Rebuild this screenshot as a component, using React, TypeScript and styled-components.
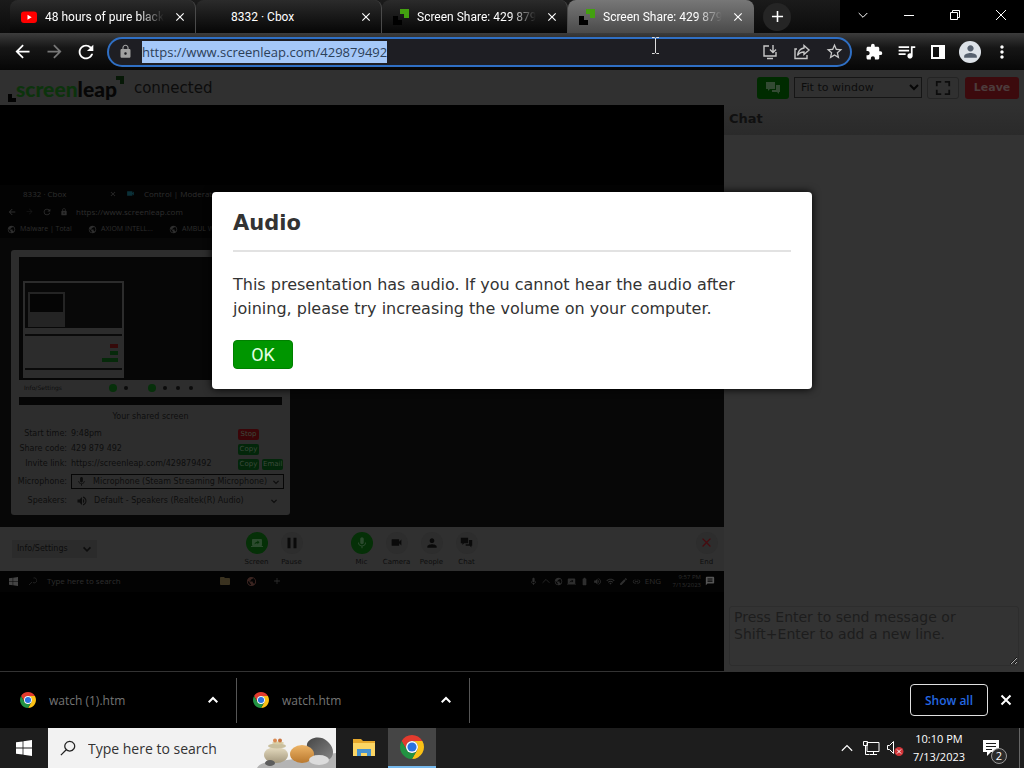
import React, { useEffect, useRef } from "react";
import styled, { createGlobalStyle } from "styled-components";
import {
  MdArrowBack,
  MdArrowForward,
  MdRefresh,
  MdLock,
  MdStarBorder,
  MdExtension,
  MdQueueMusic,
  MdMoreVert,
  MdClose,
  MdAdd,
  MdPerson,
  MdMic,
  MdVideocam,
  MdPause,
  MdVolumeUp,
  MdFolder,
  MdPublic,
  MdScreenShare,
  MdMessage,
  MdWifi,
  MdEdit,
  MdLink,
  MdBatteryFull,
} from "react-icons/md";

const ui = `"Open Sans", "Noto Sans", sans-serif`;
const page = `"DejaVu Sans", Verdana, sans-serif`;

const Global = createGlobalStyle`
  *, *::before, *::after { box-sizing: border-box; }
  body { margin: 0; background: #000; font-family: ${ui}; }
  button, input, select, textarea { font: inherit; color: inherit; margin: 0; padding: 0; border: 0; background: none; }
  svg { display: block; flex: none; }
`;

const Desktop = styled.div`
  min-height: 100vh;
  display: flex;
  flex-direction: column;
`;

/* ---------- browser frame ---------- */

const TabStrip = styled.header`
  height: 33px;
  display: flex;
  padding-left: 10px;
  background: linear-gradient(#1b1b1b, #0b0b0b);
  color: #fff;
`;

const Tab = styled.div<{ $active?: boolean }>`
  flex: 0 1 186px;
  min-width: 0;
  display: flex;
  align-items: center;
  gap: 8px;
  padding: 0 7px 0 11px;
  border-radius: 8px 8px 0 0;
  border-right: 1px solid ${(p) => (p.$active ? "transparent" : "#4a4a4a")};
  background: ${(p) => (p.$active ? "linear-gradient(#777, #4a4a4a)" : "linear-gradient(#2b2b2b, #060606)")};
`;

const TabIcon = styled.span`
  flex: none;
  width: 16px;
  height: 16px;
`;

const TabTitle = styled.span<{ $fade?: boolean }>`
  flex: 1;
  min-width: 0;
  overflow: hidden;
  white-space: nowrap;
  font-family: Roboto, sans-serif;
  font-size: 12px;
  line-height: 18px;
  mask-image: ${(p) => (p.$fade ? "linear-gradient(90deg, #000 78%, transparent)" : "none")};
`;

const PlainButton = styled.button<{ $w: number; $h: number; $round?: boolean }>`
  flex: none;
  width: ${(p) => p.$w}px;
  height: ${(p) => p.$h}px;
  display: flex;
  align-items: center;
  justify-content: center;
  border-radius: ${(p) => (p.$round ? "50%" : "0")};
`;

const NewTab = styled(PlainButton)`
  align-self: center;
  margin-left: 9px;
  background: #252525;
`;

const WindowControls = styled.div`
  margin-left: auto;
  display: flex;
  background: #000;
  color: #fff;
`;

const WindowButton = styled(PlainButton)`
  height: 29px;
`;

const Toolbar = styled.nav`
  height: 37px;
  display: flex;
  align-items: center;
  padding: 0 6px;
  color: #fff;
  background: linear-gradient(#3c3c3c, #161616 40%, #060606);
`;

const Address = styled.form`
  position: relative;
  flex: 1;
  min-width: 0;
  height: 30px;
  margin: 0 6px 0 5px;
  padding: 0 0 0 9px;
  display: flex;
  align-items: center;
  gap: 9px;
  border: 2px solid #2f6fc4;
  border-radius: 15px;
  background: #1e1e23;
  color: #c8c8c8;
`;

const AddressInput = styled.input`
  flex: 1;
  min-width: 0;
  height: 22px;
  line-height: 22px;
  font-size: 13px;
  outline: none;
  color: #e8e8e8;
  &::selection {
    background: #a5c8f8;
    color: #2c4058;
  }
`;

const AddressActions = styled.span`
  display: flex;
`;

const TextCursor = styled.svg`
  position: absolute;
  right: 189px;
  top: -2px;
`;

const Avatar = styled.span`
  width: 22px;
  height: 22px;
  border-radius: 50%;
  display: flex;
  align-items: center;
  justify-content: center;
  background: #dde2e8;
  color: #56606e;
`;

/* ---------- screenleap page ---------- */

const View = styled.main`
  position: relative;
  flex: 1;
  display: flex;
  flex-direction: column;
  font-family: ${page};
  background: #000;
`;

const ViewHeader = styled.div`
  height: 35px;
  display: flex;
  align-items: center;
  gap: 5px;
  padding: 0 5px 0 8px;
  background: #303030;
  color: #0c0c0c;
`;

const Logo = styled.a`
  position: relative;
  padding: 2px 7px 0 8px;
  font-family: Lato, sans-serif;
  font-weight: 900;
  font-size: 21px;
  line-height: 26px;
  color: #060606;
  text-decoration: none;
`;

const LogoGreen = styled.span`
  color: #0c330c;
`;

const LogoCorner = styled.svg<{ $end?: boolean }>`
  position: absolute;
  ${(p) => (p.$end ? "right: 0; top: 2px;" : "left: 0; bottom: 0;")}
`;

const Status = styled.span`
  flex: 1;
  padding-left: 5px;
  font-size: 15px;
`;

const HeaderButton = styled.button<{ $tone: "green" | "red" | "plain" }>`
  height: 22px;
  min-width: 32px;
  display: flex;
  align-items: center;
  justify-content: center;
  border-radius: 3px;
  font-size: 11px;
  font-weight: bold;
  border: 1px solid ${(p) => (p.$tone === "plain" ? "#242424" : "transparent")};
  background: ${(p) => ({ green: "#002b00", red: "#3c0a0d", plain: "#303030" })[p.$tone]};
  color: ${(p) => (p.$tone === "plain" ? "#0c0c0c" : "#4c3c3c")};
`;

const Leave = styled(HeaderButton)`
  width: 54px;
  margin-left: 1px;
`;

const FitSelect = styled.select`
  appearance: none;
  width: 128px;
  height: 21px;
  padding-left: 6px;
  font-size: 11px;
  border: 1px solid #151515;
  background: #303030;
`;

const SelectBox = styled.label`
  position: relative;
  display: flex;
`;

const SelectArrow = styled.svg`
  position: absolute;
  right: 3px;
  top: 6px;
`;

const Split = styled.div`
  flex: 1;
  display: flex;
`;

const Stage = styled.section`
  flex: 1;
  min-width: 0;
  display: flex;
  flex-direction: column;
  justify-content: center;
  background: #000;
`;

const Chat = styled.aside`
  width: 300px;
  display: flex;
  flex-direction: column;
  background: #333;
  color: #101010;
`;

const ChatTitle = styled.h2`
  margin: 0;
  padding: 5px;
  height: 30px;
  font-size: 13px;
  line-height: 18px;
  background: linear-gradient(#303030, #2a2a2a);
`;

const ChatInput = styled.textarea`
  margin: auto 5px 5px;
  height: 60px;
  padding: 2px 4px;
  font-size: 14px;
  line-height: 17px;
  border: 1px solid #2d2d2d;
  border-radius: 3px;
  &::placeholder {
    color: #1d1d1d;
    opacity: 1;
  }
`;

const Dialog = styled.div`
  position: absolute;
  top: 122px;
  left: 0;
  right: 0;
  margin: 0 auto;
  width: 600px;
  max-width: 90%;
  padding: 16px 21px 20px;
  border-radius: 4px;
  background: #fff;
  color: #333;
  box-shadow: 0 0 8px #000;
`;

const DialogTitle = styled.h1`
  margin: 0 0 21px;
  padding-bottom: 12px;
  font-size: 21px;
  line-height: 30px;
  border-bottom: 2px solid #e2e2e2;
`;

const DialogText = styled.p`
  margin: 0 0 19px;
  font-size: 16px;
  line-height: 24px;
`;

const OkButton = styled.button`
  display: block;
  width: 60px;
  height: 29px;
  border-radius: 4px;
  border: 1px solid #008000;
  background: #009600;
  color: #e4ffe4;
  font-family: Roboto, sans-serif;
  font-size: 18px;
`;

/* ---------- presenter's screen ---------- */

const Shared = styled.div`
  font-size: 8px;
  line-height: 10px;
  color: #0d0d0d;
`;

const DimRow = styled.div<{ $h: number; $gap: number; $pad: number }>`
  height: ${(p) => p.$h}px;
  padding: 0 ${(p) => p.$pad}px;
  gap: ${(p) => p.$gap}px;
  display: flex;
  align-items: center;
  white-space: nowrap;
  overflow: hidden;
  font-family: ${ui};
  color: #2e2e2e;
  background: #030303;
`;

const DimTab = styled.span`
  width: 94px;
  display: flex;
  align-items: center;
  justify-content: space-between;
`;

const Bookmark = styled.span`
  width: 68px;
  display: flex;
  align-items: center;
  gap: 4px;
  font-size: 7px;
`;

const SharedPage = styled.div`
  padding: 12px 11px;
  height: 289px;
  background: #070707;
`;

const AppWindow = styled.div`
  width: 279px;
  height: 265px;
  padding: 7px 8px;
  border-radius: 3px;
  background: #2d2d2d;
`;

const Preview = styled.div`
  height: 123px;
  padding: 24px 4px 0;
  background: #060606;
`;

const MiniWindow = styled.div`
  width: 101px;
  height: 97px;
  padding: 2px;
  background: #2c2c2c;
`;

const MiniScreen = styled.div`
  height: 45px;
  padding: 9px 3px;
  background: #080808;
`;

const MicroWindow = styled.div`
  width: 37px;
  height: 35px;
  border: 2px solid #242424;
  border-bottom-width: 15px;
  background: #050505;
`;

const MiniBar = styled.div`
  margin-top: 6px;
  height: 2px;
  background: #0a0a0a;
`;

const MiniList = styled.div`
  padding: 8px 4px 0 0;
  display: grid;
  gap: 3px;
  justify-items: end;
`;

const MiniChip = styled.span<{ $red?: boolean; $w: number }>`
  width: ${(p) => p.$w}px;
  height: 4px;
  background: ${(p) => (p.$red ? "#350a0a" : "#06290a")};
`;

const PreviewControls = styled.div`
  height: 17px;
  display: grid;
  grid-template-columns: 82px repeat(7, 13px);
  padding-left: 5px;
  align-items: center;
  justify-items: center;
  font-size: 6px;
`;

const PreviewLabel = styled.span`
  justify-self: start;
`;

const PreviewDot = styled.span<{ $green?: boolean }>`
  width: ${(p) => (p.$green ? 8 : 4)}px;
  height: ${(p) => (p.$green ? 8 : 4)}px;
  border-radius: 4px;
  background: ${(p) => (p.$green ? "#06300a" : "#0b0b0b")};
`;

const PreviewTaskbar = styled.div`
  height: 8px;
  background: #050505;
`;

const ShareTitle = styled.div`
  padding: 7px 0 5px;
  text-align: center;
`;

const InfoRow = styled.div<{ $h?: number }>`
  height: ${(p) => p.$h ?? 15}px;
  display: grid;
  grid-template-columns: 48px 163px auto;
  column-gap: 4px;
  align-items: center;
  white-space: nowrap;
`;

const InfoLabel = styled.span`
  justify-self: end;
`;

const ChipGroup = styled.span`
  display: flex;
  gap: 3px;
`;

const Chip = styled.span<{ $red?: boolean }>`
  min-width: 21px;
  height: 11px;
  padding: 0 1px;
  font-size: 7px;
  text-align: center;
  border-radius: 2px;
  background: ${(p) => (p.$red ? "#3a0508" : "#03260a")};
  color: #3c4a3c;
`;

const Device = styled.span<{ $framed?: boolean }>`
  grid-column: 2 / 4;
  height: 15px;
  padding: 0 4px;
  display: flex;
  align-items: center;
  gap: 6px;
  border: 1px solid ${(p) => (p.$framed ? "#060606" : "transparent")};
`;

const DeviceName = styled.span`
  flex: 1;
`;

const ControlBar = styled.div`
  height: 44px;
  display: flex;
  align-items: flex-start;
  padding-top: 5px;
  background: #303030;
`;

const Settings = styled.span`
  width: 85px;
  margin: 8px 142px 0 12px;
  padding: 0 6px 0 5px;
  height: 18px;
  display: flex;
  align-items: center;
  justify-content: space-between;
  background: #2b2b2b;
`;

const Control = styled.span<{ $gapAfter?: boolean; $last?: boolean }>`
  width: 35px;
  margin-right: ${(p) => (p.$gapAfter ? 35 : 0)}px;
  margin-left: ${(p) => (p.$last ? "auto" : "0")};
  display: flex;
  flex-direction: column;
  align-items: center;
  gap: 3px;
  font-size: 7px;
`;

const ControlDisc = styled.span<{ $green?: boolean }>`
  width: 22px;
  height: 22px;
  border-radius: 50%;
  display: flex;
  align-items: center;
  justify-content: center;
  background: ${(p) => (p.$green ? "#053007" : "#2d2d2d")};
  color: ${(p) => (p.$green ? "#2c4a2e" : "#0a0a0a")};
`;

const SharedSearch = styled.span`
  width: 162px;
`;

const SharedApps = styled.span`
  display: flex;
  align-items: center;
  gap: 15px;
`;

const SharedTray = styled.span`
  margin-left: auto;
  display: flex;
  align-items: center;
  gap: 4px;
`;

const TinyClock = styled.span`
  width: 36px;
  font-size: 6px;
  line-height: 8px;
  text-align: right;
`;

/* ---------- downloads and taskbar ---------- */

const Downloads = styled.footer`
  height: 57px;
  display: flex;
  align-items: center;
  padding-right: 6px;
  border-top: 1px solid #333;
  background: #000;
`;

const Download = styled.div<{ $w: number; $pad: number }>`
  flex: 0 1 ${(p) => p.$w}px;
  height: 45px;
  display: flex;
  align-items: center;
  gap: 13px;
  padding: 0 12px 0 ${(p) => p.$pad}px;
  border-right: 1px solid #555;
`;

const DownloadName = styled.a`
  flex: 1;
  font-size: 12px;
  color: #757575;
  text-decoration: none;
`;

const ShowAll = styled.button`
  width: 78px;
  height: 32px;
  margin: 0 6px 0 auto;
  border: 1px solid #e0e0e0;
  border-radius: 4px;
  font-size: 12px;
  font-weight: 600;
  color: #2467e0;
`;

const Taskbar = styled.footer`
  height: 40px;
  display: flex;
  background: #1d1d1d;
  color: #fff;
`;

const Search = styled.label`
  flex: 0 1 288px;
  min-width: 0;
  height: 40px;
  display: flex;
  align-items: center;
  gap: 12px;
  padding-left: 12px;
  background: #f2f2f2;
  color: #222;
`;

const SearchInput = styled.input`
  flex: 1;
  min-width: 0;
  font-size: 14px;
  outline: none;
  &::placeholder {
    color: #333;
    opacity: 1;
  }
`;

const TaskButton = styled(PlainButton)<{ $active?: boolean }>`
  margin-left: ${(p) => (p.$active ? 0 : 4)}px;
  background: ${(p) => (p.$active ? "#454545" : "transparent")};
  border-bottom: ${(p) => (p.$active ? "2px solid #76b9ed" : "0")};
`;

const Tray = styled.div`
  margin-left: auto;
  display: flex;
  align-items: center;
  padding-right: 4px;
`;

const Clock = styled.time`
  width: 64px;
  text-align: center;
  white-space: nowrap;
  font-size: 11px;
  line-height: 18px;
`;

const Notices = styled(PlainButton)`
  position: relative;
  justify-content: flex-start;
  padding-left: 12px;
  border-right: 1px solid #666;
`;

const Badge = styled.span`
  position: absolute;
  right: 12px;
  bottom: 4px;
  width: 16px;
  height: 16px;
  border-radius: 50%;
  border: 1px solid #999;
  background: #2b2b2b;
  font-size: 11px;
  line-height: 14px;
  text-align: center;
`;

/* ---------- drawings ---------- */

const ChromeMark = ({ size }: { size: number }) => (
  <svg width={size} height={size} viewBox="0 0 24 24">
    <path fill="#e33b2e" d="M1.61 6A12 12 0 0 1 22.39 6L12 6A6 6 0 0 0 6.8 15Z" />
    <path fill="#fbc116" d="M22.39 6A12 12 0 0 1 12 24L17.2 15A6 6 0 0 0 12 6Z" />
    <path fill="#229342" d="M12 24A12 12 0 0 1 1.61 6L6.8 15A6 6 0 0 0 17.2 15Z" />
    <circle cx="12" cy="12" r="6" fill="#fff" />
    <circle cx="12" cy="12" r="4.6" fill="#2a72e0" />
  </svg>
);

const YoutubeMark = () => (
  <svg width="16" height="16" viewBox="0 0 16 16">
    <rect y="2.500" width="16" height="11.500" rx="3" fill="#f00" />
    <path d="M6.500 5.800v5l4.200-2.500z" fill="#fff" />
  </svg>
);

const LeapMark = () => (
  <svg width="16" height="16" viewBox="0 0 16 16">
    <path d="M7 0h9v9h-5V5H7z" fill="#43a010" />
    <path d="M0 7h5v4h4v5H0z" fill="#000" />
  </svg>
);

const WindowsMark = ({ size, color }: { size: number; color: string }) => (
  <svg width={size} height={size} viewBox="0 0 16 16" fill={color}>
    <path d="M0 2.300 6.600 1.400v6.200H0zM7.400 1.300 16 0v7.600H7.400zM0 8.400h6.600v6.200L0 13.700zM7.400 8.400H16V16l-8.600-1.300z" />
  </svg>
);

const Chevron = ({ up, size = 10, stroke = 2 }: { up?: boolean; size?: number; stroke?: number }) => (
  <svg width={size} height={size} viewBox="0 0 10 10" fill="none" stroke="currentColor" strokeWidth={stroke}>
    <path d={up ? "M0.700 7.300 5 3l4.300 4.300" : "M0.700 3 5 7.300 9.300 3"} />
  </svg>
);

const Line = ({ d, size = 18, stroke = 1.4 }: { d: string; size?: number; stroke?: number }) => (
  <svg width={size} height={size} viewBox="0 0 18 18" fill="none" stroke="currentColor" strokeWidth={stroke}>
    <path d={d} />
  </svg>
);

const Bubbles = ({ size, color }: { size: number; color: string }) => (
  <svg width={size} height={size} viewBox="0 0 16 16" fill={color}>
    <path d="M1 2h9v7H5l-2 2V9H1z" />
    <path d="M11 5h4v7h-1v2l-2-2H7v-2h4z" />
  </svg>
);

const Stones = () => (
  <svg width="79" height="40" viewBox="0 0 79 40">
    <defs>
      <linearGradient id="pale" x2="0" y2="1">
        <stop stopColor="#e6dcc0" />
        <stop offset="1" stopColor="#a3977c" />
      </linearGradient>
      <linearGradient id="amber" x2="0" y2="1">
        <stop stopColor="#eeb567" />
        <stop offset="1" stopColor="#b9782e" />
      </linearGradient>
      <linearGradient id="slate" x2="1" y2="1">
        <stop stopColor="#454545" />
        <stop offset="1" stopColor="#858585" />
      </linearGradient>
    </defs>
    <path d="M0 40c3-5 8-6 16-6l63-9v15z" fill="#b4b4b4" />
    <path d="M50 16c2-7 14-9 20-3 6 5 8 12 4 17-6 5-15 1-20-5-3-3-5-6-4-9z" fill="url(#slate)" />
    <ellipse cx="45" cy="26" rx="12" ry="9" fill="url(#amber)" />
    <ellipse cx="19" cy="27" rx="12" ry="8" fill="url(#pale)" />
    <ellipse cx="20" cy="18" rx="9" ry="2.500" fill="#c9bf9e" />
    <ellipse cx="21" cy="15" rx="6" ry="1.500" fill="#d9cda3" />
    <circle cx="18" cy="12.500" r="2" fill="#d98a52" />
    <circle cx="23" cy="12.500" r="2" fill="#c9743f" />
    <ellipse cx="62" cy="32" rx="10" ry="5" fill="#dcdcdc" />
    <ellipse cx="13" cy="35" rx="5" ry="3" fill="#5c5c5c" />
  </svg>
);

const controls = [
  { name: "Screen", icon: <MdScreenShare size={12} />, green: true },
  { name: "Pause", icon: <MdPause size={18} />, gap: true },
  { name: "Mic", icon: <MdMic size={14} />, green: true },
  { name: "Camera", icon: <MdVideocam size={13} /> },
  { name: "People", icon: <MdPerson size={14} /> },
  { name: "Chat", icon: <Bubbles size={13} color="#0a0a0a" /> },
];

const tabs = [
  { title: "48 hours of pure black", icon: <YoutubeMark />, fade: true },
  { title: "8332 · Cbox", icon: null },
  { title: "Screen Share: 429 879", icon: <LeapMark />, fade: true },
  { title: "Screen Share: 429 879", icon: <LeapMark />, fade: true, active: true },
];

const PresenterScreen = () => (
  <Shared>
    <DimRow $h={18} $gap={9} $pad={23}>
      <DimTab>
        8332 · Cbox
        <MdClose size={8} />
      </DimTab>
      <MdVideocam size={9} color="#0b3038" />
      <span>Control | Moderation</span>
    </DimRow>
    <DimRow $h={18} $gap={8} $pad={7}>
      <MdArrowBack size={10} />
      <MdArrowForward size={9} color="#151515" />
      <MdRefresh size={10} />
      <MdLock size={8} />
      <span>https://www.screenleap.com</span>
    </DimRow>
    <DimRow $h={17} $gap={13} $pad={7}>
      {["Malware | Total", "AXIOM INTELL...", "AMBUL W..."].map((b) => (
        <Bookmark key={b}>
          <MdPublic size={9} />
          {b}
        </Bookmark>
      ))}
    </DimRow>
    <SharedPage>
      <AppWindow>
        <Preview>
          <MiniWindow>
            <MiniScreen>
              <MicroWindow />
            </MiniScreen>
            <MiniBar />
            <MiniList>
              <MiniChip $w={8} $red />
              <MiniChip $w={8} />
              <MiniChip $w={16} />
            </MiniList>
            <MiniBar />
          </MiniWindow>
        </Preview>
        <PreviewControls>
          <PreviewLabel>Info/Settings</PreviewLabel>
          <PreviewDot $green />
          <PreviewDot />
          <span />
          <PreviewDot $green />
          <PreviewDot />
          <PreviewDot />
          <PreviewDot />
        </PreviewControls>
        <PreviewTaskbar />
        <ShareTitle>Your shared screen</ShareTitle>
        <InfoRow>
          <InfoLabel>Start time:</InfoLabel>
          <span>9:48pm</span>
          <ChipGroup>
            <Chip $red>Stop</Chip>
          </ChipGroup>
        </InfoRow>
        <InfoRow>
          <InfoLabel>Share code:</InfoLabel>
          <span>429 879 492</span>
          <ChipGroup>
            <Chip>Copy</Chip>
          </ChipGroup>
        </InfoRow>
        <InfoRow>
          <InfoLabel>Invite link:</InfoLabel>
          <span>https://screenleap.com/429879492</span>
          <ChipGroup>
            <Chip>Copy</Chip>
            <Chip>Email</Chip>
          </ChipGroup>
        </InfoRow>
        <InfoRow $h={20}>
          <InfoLabel>Microphone:</InfoLabel>
          <Device $framed>
            <MdMic size={11} />
            <DeviceName>Microphone (Steam Streaming Microphone)</DeviceName>
            <Chevron size={6} />
          </Device>
        </InfoRow>
        <InfoRow $h={18}>
          <InfoLabel>Speakers:</InfoLabel>
          <Device>
            <MdVolumeUp size={12} />
            <DeviceName>Default - Speakers (Realtek(R) Audio)</DeviceName>
            <Chevron size={6} />
          </Device>
        </InfoRow>
      </AppWindow>
    </SharedPage>
    <ControlBar>
      <Settings>
        Info/Settings
        <Chevron size={8} />
      </Settings>
      {controls.map((c) => (
        <Control key={c.name} $gapAfter={c.gap}>
          <ControlDisc $green={c.green}>{c.icon}</ControlDisc>
          {c.name}
        </Control>
      ))}
      <Control $last>
        <ControlDisc>
          <MdClose size={15} color="#460c10" />
        </ControlDisc>
        End
      </Control>
    </ControlBar>
    <DimRow $h={21} $gap={10} $pad={9}>
      <WindowsMark size={9} color="#444" />
      <Line d="M11 2a5 5 0 1 1-1 9M8 10l-6 6" size={9} />
      <SharedSearch>Type here to search</SharedSearch>
      <SharedApps>
        <MdFolder size={12} color="#3a3220" />
        <MdPublic size={11} color="#3a2420" />
        <MdAdd size={10} />
      </SharedApps>
      <SharedTray>
        <MdMic size={9} />
        <Chevron up size={8} stroke={1} />
        <MdPublic size={9} />
        <MdScreenShare size={9} />
        <MdBatteryFull size={9} />
        <MdVolumeUp size={9} />
        <MdWifi size={9} />
        <MdEdit size={9} />
        <MdLink size={9} />
        <span>ENG</span>
        <TinyClock>
          9:57 PM
          <br />
          7/13/2023
        </TinyClock>
        <MdMessage size={10} color="#555" />
      </SharedTray>
    </DimRow>
  </Shared>
);

export default function App() {
  const address = useRef<HTMLInputElement>(null);
  useEffect(() => {
    address.current?.focus();
    address.current?.select();
  }, []);

  return (
    <Desktop>
      <Global />
      <TabStrip>
        {tabs.map((t, i) => (
          <Tab key={i} $active={t.active}>
            <TabIcon>{t.icon}</TabIcon>
            <TabTitle $fade={t.fade}>{t.title}</TabTitle>
            <PlainButton $w={16} $h={16} aria-label="Close tab">
              <MdClose size={14} />
            </PlainButton>
          </Tab>
        ))}
        <NewTab $w={28} $h={28} $round aria-label="New tab">
          <MdAdd size={19} />
        </NewTab>
        <WindowControls>
          <WindowButton $w={46} $h={29} aria-label="Search tabs">
            <Chevron stroke={1} />
          </WindowButton>
          <WindowButton $w={46} $h={29} aria-label="Minimize">
            <Line d="M4 9.500h10" stroke={1} />
          </WindowButton>
          <WindowButton $w={46} $h={29} aria-label="Restore">
            <Line d="M4.500 6.500h7v7h-7zM6.500 6.500v-2h7v7h-2" stroke={1} />
          </WindowButton>
          <WindowButton $w={46} $h={29} aria-label="Close">
            <Line d="M4 4l10 10M14 4 4 14" stroke={1} />
          </WindowButton>
        </WindowControls>
      </TabStrip>

      <Toolbar>
        <PlainButton $w={32} $h={32} aria-label="Back">
          <MdArrowBack size={21} />
        </PlainButton>
        <PlainButton $w={32} $h={32} aria-label="Forward">
          <MdArrowForward size={21} color="#777" />
        </PlainButton>
        <PlainButton $w={32} $h={32} aria-label="Reload">
          <MdRefresh size={22} />
        </PlainButton>
        <Address onSubmit={(e) => e.preventDefault()}>
          <MdLock size={15} color="#a0a0a0" />
          <AddressInput ref={address} aria-label="Address" defaultValue="https://www.screenleap.com/429879492" />
          <AddressActions>
            <PlainButton type="button" $w={32} $h={26} aria-label="Install">
              <Line d="M8 3H3v10h12V9M6 15.500h6M12 2v7M9 6.500l3 3 3-3" />
            </PlainButton>
            <PlainButton type="button" $w={32} $h={26} aria-label="Share">
              <Line d="M4 6H2v9.500h12V12M11 2.500l5 4.500-5 4.500V9C8 9 6 10 4.500 12.500 5 9 7 5.500 11 5z" />
            </PlainButton>
            <PlainButton type="button" $w={32} $h={26} aria-label="Bookmark">
              <MdStarBorder size={19} />
            </PlainButton>
          </AddressActions>
          <TextCursor width="11" height="17" viewBox="0 0 11 17" fill="none" stroke="#ddd">
            <path d="M2 0.500h2.500l1 1 1-1H9M5.500 1v15M2 16.500h2.500l1-1 1 1H9" />
          </TextCursor>
        </Address>
        <PlainButton $w={32} $h={32} aria-label="Extensions">
          <MdExtension size={18} />
        </PlainButton>
        <PlainButton $w={32} $h={32} aria-label="Media">
          <MdQueueMusic size={21} />
        </PlainButton>
        <PlainButton $w={32} $h={32} aria-label="Side panel">
          <svg width="14" height="14" viewBox="0 0 14 14">
            <path fillRule="evenodd" d="M0 0h14v14H0zM2 2v10h6V2z" fill="#fff" />
          </svg>
        </PlainButton>
        <PlainButton $w={32} $h={32} aria-label="Profile">
          <Avatar>
            <MdPerson size={19} />
          </Avatar>
        </PlainButton>
        <PlainButton $w={32} $h={32} aria-label="Menu">
          <MdMoreVert size={20} />
        </PlainButton>
      </Toolbar>

      <View>
        <ViewHeader>
          <Logo href="#">
            <LogoCorner width="8" height="8" viewBox="0 0 8 8">
              <path d="M0 0h4v4h4v4H0z" fill="#020202" />
            </LogoCorner>
            <LogoGreen>screen</LogoGreen>leap
            <LogoCorner $end width="8" height="8" viewBox="0 0 8 8">
              <path d="M0 0h8v8H4V4H0z" fill="#061806" />
            </LogoCorner>
          </Logo>
          <Status>connected</Status>
          <HeaderButton $tone="green" aria-label="Chat">
            <Bubbles size={16} color="#334a33" />
          </HeaderButton>
          <SelectBox>
            <FitSelect aria-label="Zoom">
              <option>Fit to window</option>
            </FitSelect>
            <SelectArrow width="10" height="9" viewBox="0 0 10 9" fill="none" stroke="#060606" strokeWidth="2">
              <path d="M1 2l4 4 4-4" />
            </SelectArrow>
          </SelectBox>
          <HeaderButton $tone="plain" aria-label="Full screen">
            <Line d="M2 7V2h5M11 2h5v5M16 11v5h-5M7 16H2v-5" size={16} stroke={2} />
          </HeaderButton>
          <Leave $tone="red">Leave</Leave>
        </ViewHeader>
        <Split>
          <Stage>
            <PresenterScreen />
          </Stage>
          <Chat>
            <ChatTitle>Chat</ChatTitle>
            <ChatInput
              aria-label="Message"
              placeholder="Press Enter to send message or Shift+Enter to add a new line."
            />
          </Chat>
        </Split>
        <Dialog role="dialog" aria-labelledby="dialog-title">
          <DialogTitle id="dialog-title">Audio</DialogTitle>
          <DialogText>
            This presentation has audio. If you cannot hear the audio after joining, please try increasing the volume on
            your computer.
          </DialogText>
          <OkButton>OK</OkButton>
        </Dialog>
      </View>

      <Downloads>
        <Download $w={237} $pad={20}>
          <ChromeMark size={16} />
          <DownloadName href="#">watch (1).htm</DownloadName>
          <PlainButton $w={22} $h={22} aria-label="Options for watch (1).htm">
            <svg width="10" height="10" viewBox="0 0 10 10" fill="none" stroke="#fff" strokeWidth="2">
              <path d="M0.700 7.300 5 3l4.300 4.300" />
            </svg>
          </PlainButton>
        </Download>
        <Download $w={233} $pad={16}>
          <ChromeMark size={16} />
          <DownloadName href="#">watch.htm</DownloadName>
          <PlainButton $w={22} $h={22} aria-label="Options for watch.htm">
            <svg width="10" height="10" viewBox="0 0 10 10" fill="none" stroke="#fff" strokeWidth="2">
              <path d="M0.700 7.300 5 3l4.300 4.300" />
            </svg>
          </PlainButton>
        </Download>
        <ShowAll>Show all</ShowAll>
        <PlainButton $w={24} $h={24} aria-label="Close downloads">
          <svg width="12" height="12" viewBox="0 0 12 12" stroke="#fff" strokeWidth="2">
            <path d="M1.500 1.500l9 9M10.500 1.500l-9 9" />
          </svg>
        </PlainButton>
      </Downloads>

      <Taskbar>
        <PlainButton $w={48} $h={40} aria-label="Start">
          <WindowsMark size={16} color="#fff" />
        </PlainButton>
        <Search>
          <Line d="M11 1.500a5.500 5.500 0 1 1-.1 0zM7 11l-6 6" size={16} />
          <SearchInput placeholder="Type here to search" aria-label="Type here to search" />
          <Stones />
        </Search>
        <TaskButton $w={48} $h={40} aria-label="File Explorer">
          <svg width="22" height="20" viewBox="0 0 22 20">
            <path d="M0 1h8l2 2h12v15H0z" fill="#e6a82c" />
            <path d="M0 5h22v13H0z" fill="#fbd564" />
            <path d="M4 18v-7h14v7h-4v-3H8v3z" fill="#4792cf" />
          </svg>
        </TaskButton>
        <TaskButton $w={48} $h={40} $active aria-label="Google Chrome">
          <ChromeMark size={24} />
        </TaskButton>
        <Tray>
          <PlainButton $w={24} $h={40} aria-label="Hidden icons">
            <Chevron up size={12} stroke={1} />
          </PlainButton>
          <PlainButton $w={24} $h={40} aria-label="Network">
            <Line d="M5 3.500h12v9H5zM8 15.500h7M11.500 12.500v3M3.500 7v8.500h4M1.500 2.500h4v4h-4z" stroke={1} />
          </PlainButton>
          <PlainButton $w={24} $h={40} aria-label="Volume muted">
            <svg width="18" height="18" viewBox="0 0 18 18" fill="none" stroke="#fff">
              <path d="M1.500 6.500h2l4-4v12l-4-4h-2z" />
              <circle cx="13" cy="12.500" r="4.500" fill="#d13438" stroke="none" />
              <path d="M11 10.500l4 4M15 10.500l-4 4" />
            </svg>
          </PlainButton>
          <Clock>
            10:10 PM
            <br />
            7/13/2023
          </Clock>
          <Notices $w={49} $h={40} aria-label="Notifications">
            <svg width="16" height="16" viewBox="0 0 16 16">
              <path d="M0 0h16v12H8l-4 4v-4H0z" fill="#fff" />
              <path d="M3 3.500h10M3 6.500h10M3 9.500h6" stroke="#1d1d1d" />
            </svg>
            <Badge>2</Badge>
          </Notices>
        </Tray>
      </Taskbar>
    </Desktop>
  );
}
